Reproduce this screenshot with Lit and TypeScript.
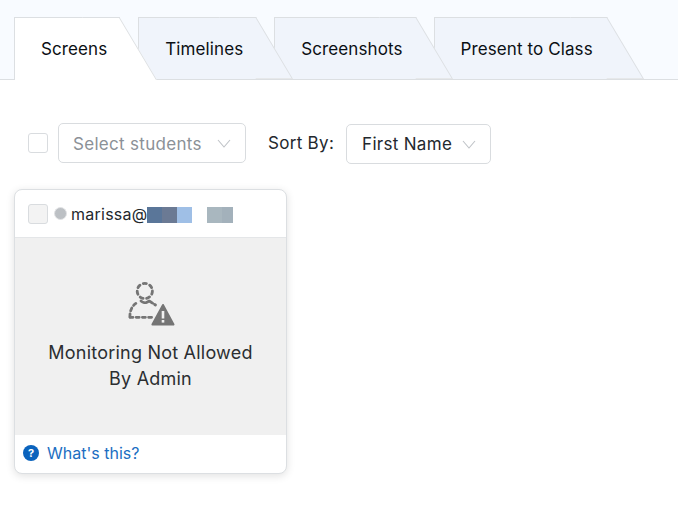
import { LitElement, html, css } from "lit";
import { customElement } from "lit/decorators.js";

const chevron = html`<svg class="chev" width="14" height="9" viewBox="0 0 14 9"><path d="M1 1 L7 8 L13 1" fill="none" stroke="#bfc3c7" stroke-width="1.1"/></svg>`;

@customElement("app-root")
export class AppRoot extends LitElement {
  static styles = css`
    :host { display: block; width: 678px; height: 506px; background: #fff; font-family: Inter, "Noto Sans", sans-serif; color: #23282d; overflow: hidden; }
    .tabs { display: flex; height: 80px; box-sizing: border-box; padding: 17px 0 0 14px; background: #f8fbff; border-bottom: 1px solid #dcdfe2; }
    .tab { position: relative; height: 62px; box-sizing: border-box; padding: 0 50px 0 27px; margin-right: -19px; display: flex; align-items: center; font-size: 17px; letter-spacing: 0.1px; color: #0b0f14; white-space: nowrap; }
    .tab:nth-child(1) { z-index: 4; height: 63px; }
    .tab:nth-child(2) { z-index: 3; }
    .tab:nth-child(3) { z-index: 2; }
    .tab:nth-child(4) { z-index: 1; padding-right: 51px; }
    .tab span { position: relative; z-index: 1; top: 1px; }
    .tab:nth-child(1) span { top: 0; }
    .tab::before { content: ""; position: absolute; left: 0; right: 37px; top: 0; bottom: 0; background: #f0f4fb; border: 1px solid #dcdfe2; border-width: 1px 0 0 1px; }
    .tab::after { content: ""; position: absolute; right: 0; top: 0; bottom: 0; width: 37px; box-sizing: border-box; background: #f0f4fb; border-style: solid; border-color: #dcdfe2 #dcdfe2 #e6e8ea; border-width: 1px 1px 1px 0; transform-origin: bottom right; transform: skewX(30.8deg); }
    .tab.active::before, .tab.active::after { background: #fff; }
    .tab.active::after { border-bottom-width: 0; }
    .controls { display: flex; align-items: center; padding: 43px 0 0 28px; height: 40px; }
    .check { width: 20px; height: 20px; box-sizing: border-box; border: 1px solid #d9dcdf; border-radius: 3px; background: #fff; flex: none; }
    .select { height: 40px; box-sizing: border-box; border: 1px solid #d9dcdf; border-radius: 5px; display: flex; align-items: center; justify-content: space-between; font-size: 17px; letter-spacing: 0.3px; }
    .students { width: 188px; margin-left: 10px; padding: 0 14px; color: #8b9197; }
    .students span { padding-top: 2px; }
    .sort-label { margin-left: 22px; font-size: 17px; letter-spacing: 0.3px; color: #23282d; }
    .sort { width: 145px; margin-left: 12px; padding: 0 14px 0 15px; position: relative; top: 1px; }
    .card { margin: 26px 0 0 14px; width: 273px; height: 285px; box-sizing: border-box; border: 1px solid #dcdfe2; border-radius: 8px; box-shadow: 0 2px 8px rgba(0,0,0,.12); background: #fff; display: flex; flex-direction: column; overflow: hidden; }
    .card-head { height: 48px; flex: none; box-sizing: border-box; border-bottom: 1px solid #e4e6e8; display: flex; align-items: center; padding-left: 13px; }
    .card-head .check { background: #f3f3f3; }
    .dot { width: 13px; height: 13px; box-sizing: border-box; border-radius: 50%; background: #bcc0c4; border: 1px solid #e2e3e5; margin-left: 6px; flex: none; }
    .email { margin-left: 4px; font-size: 16px; letter-spacing: 0.25px; color: #23282d; }
    .redact { display: flex; height: 16px; margin-top: 3px; }
    .redact i { display: block; height: 100%; }
    .card-body { flex: 1; background: #f0f0f0; display: flex; flex-direction: column; align-items: center; padding-top: 42px; box-sizing: border-box; }
    .msg { margin-top: 10px; width: 220px; text-align: center; font-size: 18px; line-height: 26px; color: #2b2e31; letter-spacing: 0.22px; }
    .card-foot { height: 38px; flex: none; box-sizing: border-box; padding: 0 0 3px 8px; display: flex; align-items: center; gap: 8px; color: #1b6ec2; font-size: 16px; }
    svg { display: block; flex: none; }
  `;

  render() {
    const blocks: [number, string][] = [[15, "#5a7699"], [15, "#6b7a94"], [15, "#9fbfe6"], [15, "#fff"], [15, "#a9b7bf"], [11, "#a3b1bb"]];
    return html`
      <div class="tabs">
        <div class="tab active"><span>Screens</span></div>
        <div class="tab"><span>Timelines</span></div>
        <div class="tab"><span>Screenshots</span></div>
        <div class="tab"><span>Present to Class</span></div>
      </div>
      <div class="controls">
        <div class="check"></div>
        <div class="select students"><span>Select students</span> ${chevron}</div>
        <div class="sort-label">Sort By:</div>
        <div class="select sort">First Name ${chevron}</div>
      </div>
      <div class="card">
        <div class="card-head">
          <div class="check"></div>
          <div class="dot"></div>
          <div class="email">marissa@</div>
          <div class="redact">${blocks.map(([w, c]) => html`<i style="width:${w}px;background:${c}"></i>`)}</div>
        </div>
        <div class="card-body">
          <svg width="50" height="50" viewBox="0 0 50 50">
            <g fill="none" stroke="#757575" stroke-width="2.8" stroke-linecap="round">
              <circle cx="18.8" cy="11" r="7.6" stroke-dasharray="3.2 3.6"/>
              <path d="M4 37 C3.5 30 7 24.5 11.5 22.5" stroke-dasharray="3 3.2"/>
              <path d="M15 21 Q19 24.5 23 21" stroke-dasharray="3.5 2"/>
              <path d="M24 21.5 L29.5 25" stroke-dasharray="3 2.5"/>
              <path d="M4 37.3 H28" stroke-dasharray="3 3.2"/>
            </g>
            <path d="M37 25 L47.5 44.5 H26.4 Z" fill="#757575" stroke="#757575" stroke-width="2" stroke-linejoin="round"/>
            <rect x="35.7" y="31" width="2.6" height="7.5" fill="#f0f0f0"/>
            <rect x="35.7" y="40" width="2.6" height="2.6" fill="#f0f0f0"/>
          </svg>
          <div class="msg">Monitoring Not Allowed By Admin</div>
        </div>
        <div class="card-foot">
          <svg width="16" height="16" viewBox="0 0 16 16"><circle cx="8" cy="8" r="8" fill="#0b63bd"/><text x="8" y="12" text-anchor="middle" font-size="11" font-weight="700" font-family="Inter, sans-serif" fill="#fff">?</text></svg>
          <span>What's this?</span>
        </div>
      </div>
    `;
  }
}
